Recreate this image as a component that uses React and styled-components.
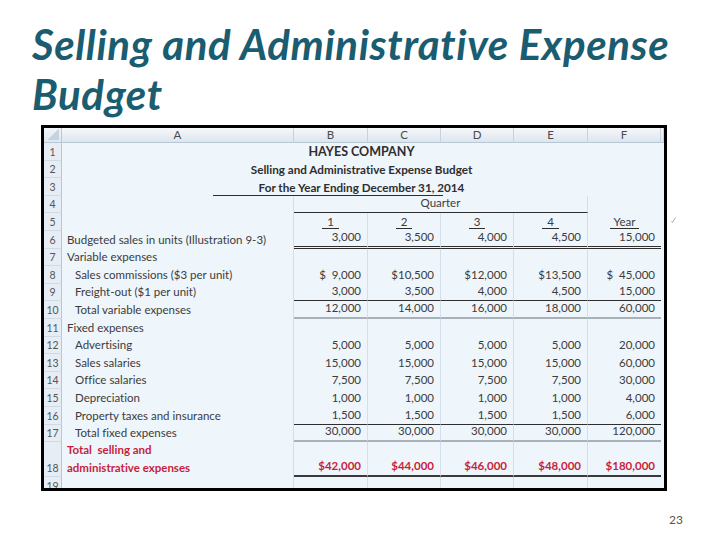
import React from "react";
import styled, { createGlobalStyle } from "styled-components";

const GlobalStyle = createGlobalStyle`
  html, body { margin: 0; padding: 0; background: #fff; }
  body { width: 720px; height: 540px; overflow: hidden; }
`;

const Slide = styled.div`
  width: 720px;
  height: 540px;
  display: flex;
  flex-direction: column;
  font-family: Lato, "Open Sans", sans-serif;
  font-variant-ligatures: none;
`;

const Title = styled.h1`
  margin: 0;
  padding: 19px 0 0 32px;
  font-family: Lato, "Open Sans", sans-serif;
  font-weight: 700;
  font-style: italic;
  font-size: 42px;
  line-height: 50px;
  color: #1a5c70;
  letter-spacing: 0.6px;
`;

const SheetRow = styled.div`
  display: flex;
  align-items: flex-start;
  margin: 6px 0 0 41px;
`;

const Sheet = styled.div`
  width: 626px;
  height: 366px;
  box-sizing: border-box;
  border: 3px solid #000;
  overflow: hidden;
  background: #eef5fb;
  display: grid;
  grid-template-columns: 18px 232px 74px 73px 73px 74px 73px 3px;
  grid-template-rows: 15px repeat(17, 17.6px) 35px 17.6px;
  font-family: Lato, "Open Sans", sans-serif;
  font-size: 11.5px;
  color: #3c3c3c;
`;

const Corner = styled.div`
  background: linear-gradient(135deg, transparent 50%, #c3d3e2 50%) no-repeat right 2px bottom 2px / 11px 11px,
    linear-gradient(#f3f6f9, #dfe6ee);
  border-right: 1px solid #b8c7d6;
  border-bottom: 1px solid #b8c7d6;
`;

const ColHead = styled.div`
  background: linear-gradient(#f6f8fa, #dde5ed);
  border-right: 1px solid #c6d2de;
  border-bottom: 1px solid #b8c7d6;
  display: flex;
  align-items: center;
  justify-content: center;
  font-size: 11.5px;
  color: #4a4a4a;
  line-height: 1;
`;

const RowNum = styled.div`
  background: #e6edf4;
  border-right: 1px solid #b8c7d6;
  border-bottom: 1px solid #cfdae5;
  display: flex;
  align-items: flex-end;
  justify-content: center;
  padding-bottom: 1px;
  font-size: 10.5px;
  line-height: 14px;
  color: #555;
`;

const lines = {
  none: "none",
  single: "1px solid #2e2e2e",
  double: "3px double #2e2e2e",
  gray: "2px solid #a9b1b8",
  dark: "2px solid #3a3a3a",
};

const Cell = styled.div`
  grid-column: ${(p) => p.$span || "auto"};
  display: flex;
  align-items: flex-end;
  justify-content: ${(p) => (p.$align === "left" ? "flex-start" : p.$align === "center" ? "center" : "flex-end")};
  padding: 0 ${(p) => (p.$align === "right" ? "6px" : "0")} 1px ${(p) => (p.$indent ? "13px" : p.$align === "left" ? "5px" : "0")};
  border-right: ${(p) => (p.$noGrid ? "none" : "1px solid #d3dfea")};
  border-bottom: ${(p) => lines[p.$line || "none"]};
  box-sizing: border-box;
  white-space: pre;
  line-height: 16px;
  font-weight: ${(p) => (p.$bold ? 700 : 400)};
  color: ${(p) => (p.$red ? "#c81e3c" : "inherit")};
  min-width: 0;
`;

const TitleCell = styled(Cell)`
  font-size: ${(p) => p.$size || "11.7px"};
  line-height: ${(p) => (p.$size ? "17px" : "15px")};
  color: #2e2e2e;
  background: ${(p) =>
    p.$rule ? "linear-gradient(#2e2e2e, #2e2e2e) 151px 100% / 230px 1px no-repeat" : "none"};
`;

const TwoLine = styled(Cell)`
  line-height: 18px;
  padding-bottom: 0;
`;

const Under = styled.span`
  display: inline-block;
  border-bottom: 1px solid #2e2e2e;
  padding: 0 ${(p) => p.$pad || "5px"};
  line-height: 13px;
  margin-bottom: 1px;
`;

const Extra = styled.div`
  border-left: 0;
`;

const Mark = styled.svg`
  margin: 92px 0 0 4px;
  flex: none;
`;

const Footer = styled.div`
  display: flex;
  justify-content: flex-end;
  padding: 21px 37px 0 0;
  font-family: Lato, "Open Sans", sans-serif;
  font-size: 12px;
  color: #555;
`;

const rows = [
  { n: 6, label: "Budgeted sales in units (Illustration 9-3)", v: ["3,000", "3,500", "4,000", "4,500", "15,000"], line: "double" },
  { n: 7, label: "Variable expenses" },
  { n: 8, label: "Sales commissions ($3 per unit)", indent: true, v: ["$  9,000", "$10,500", "$12,000", "$13,500", "$  45,000"] },
  { n: 9, label: "Freight-out ($1 per unit)", indent: true, v: ["3,000", "3,500", "4,000", "4,500", "15,000"], line: "single" },
  { n: 10, label: "Total variable expenses", indent: true, v: ["12,000", "14,000", "16,000", "18,000", "60,000"], line: "gray" },
  { n: 11, label: "Fixed expenses" },
  { n: 12, label: "Advertising", indent: true, v: ["5,000", "5,000", "5,000", "5,000", "20,000"] },
  { n: 13, label: "Sales salaries", indent: true, v: ["15,000", "15,000", "15,000", "15,000", "60,000"] },
  { n: 14, label: "Office salaries", indent: true, v: ["7,500", "7,500", "7,500", "7,500", "30,000"] },
  { n: 15, label: "Depreciation", indent: true, v: ["1,000", "1,000", "1,000", "1,000", "4,000"] },
  { n: 16, label: "Property taxes and insurance", indent: true, v: ["1,500", "1,500", "1,500", "1,500", "6,000"], line: "single" },
  { n: 17, label: "Total fixed expenses", indent: true, v: ["30,000", "30,000", "30,000", "30,000", "120,000"], line: "gray" },
];

const totals = ["$42,000", "$44,000", "$46,000", "$48,000", "$180,000"];
const quarters = ["1", "2", "3", "4"];

const App = () => {
  return (
    <Slide>
      <GlobalStyle />
      <Title>
        Selling and Administrative Expense
        <br />
        Budget
      </Title>

      <SheetRow>
        <Sheet>
          <Corner />
          {["A", "B", "C", "D", "E", "F"].map((c) => (
            <ColHead key={c}>{c}</ColHead>
          ))}
          <ColHead />

          <RowNum>1</RowNum>
          <TitleCell $span="span 6" $align="center" $noGrid $bold $size="12.5px">HAYES COMPANY</TitleCell>
          <Extra />
          <RowNum>2</RowNum>
          <TitleCell $span="span 6" $align="center" $noGrid $bold>Selling and Administrative Expense Budget</TitleCell>
          <Extra />
          <RowNum>3</RowNum>
          <TitleCell $span="span 6" $align="center" $noGrid $bold $rule>For the Year Ending December 31, 2014</TitleCell>
          <Extra />

          <RowNum>4</RowNum>
          <Cell />
          <Cell $span="span 4" $align="center" $line="single">Quarter</Cell>
          <Cell $noGrid />
          <Extra />

          <RowNum>5</RowNum>
          <Cell />
          {quarters.map((q) => (
            <Cell key={q} $align="center">
              <Under>{q}</Under>
            </Cell>
          ))}
          <Cell $align="center" $noGrid>
            <Under $pad="4px">Year</Under>
          </Cell>
          <Extra />

          {rows.map((r) => (
            <React.Fragment key={r.n}>
              <RowNum>{r.n}</RowNum>
              <Cell $align="left" $indent={r.indent}>{r.label}</Cell>
              {(r.v || ["", "", "", "", ""]).map((v, i) => (
                <Cell key={i} $align="right" $line={r.line} $noGrid={i === 4}>
                  {v}
                </Cell>
              ))}
              <Extra />
            </React.Fragment>
          ))}

          <RowNum>18</RowNum>
          <TwoLine $align="left" $bold $red>{"Total  selling and\nadministrative expenses"}</TwoLine>
          {totals.map((t, i) => (
            <Cell key={t} $align="right" $bold $red $line="dark" $noGrid={i === 4}>
              {t}
            </Cell>
          ))}
          <Extra />

          <RowNum>19</RowNum>
          <Cell />
          <Cell />
          <Cell />
          <Cell />
          <Cell />
          <Cell $noGrid />
          <Extra />
        </Sheet>
        <Mark width="5" height="6" viewBox="0 0 5 6">
          <path d="M0.5 4 L1.5 5.5 L4.5 0.5" fill="none" stroke="#999" strokeWidth="0.8" />
        </Mark>
      </SheetRow>

      <Footer>23</Footer>
    </Slide>
  );
};

export default App;
